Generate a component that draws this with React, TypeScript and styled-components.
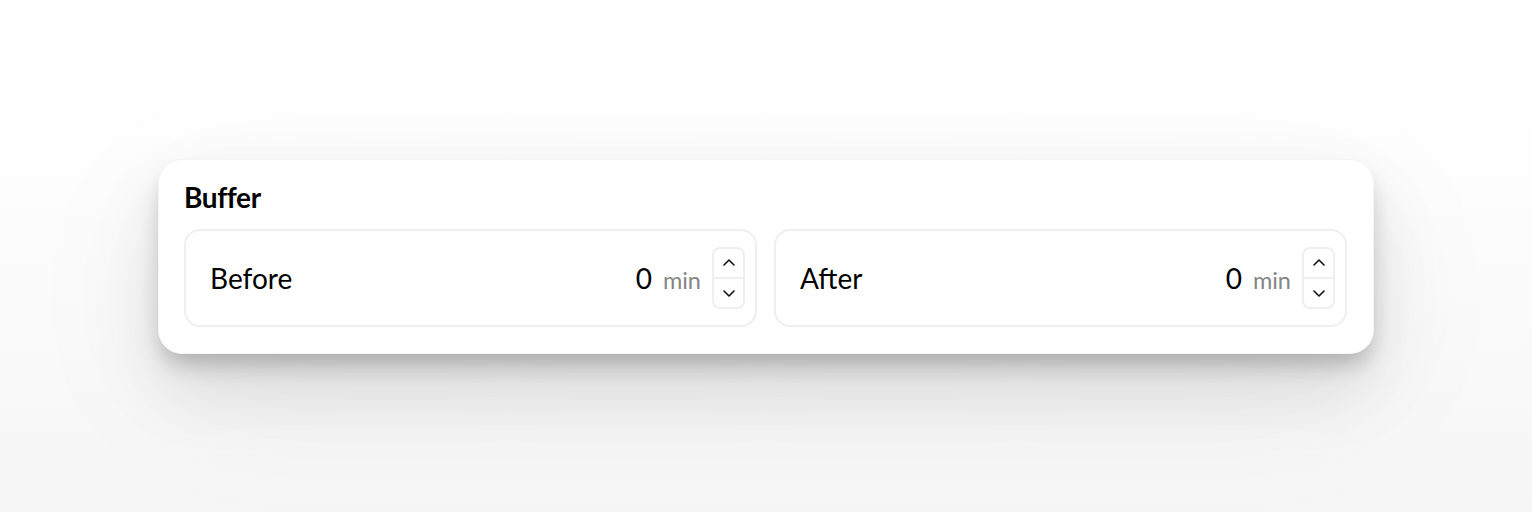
import React from "react";
import styled, { createGlobalStyle } from "styled-components";

const Global = createGlobalStyle`
  html, body { margin: 0; padding: 0; }
  body {
    font-family: Lato, "Noto Sans", sans-serif;
    background: linear-gradient(180deg, #ffffff 0%, #ffffff 20%, #f6f6f6 100%);
    color: #000;
  }
`;

const Page = styled.div`
  min-height: 100vh;
  display: flex;
  align-items: center;
  justify-content: center;
`;

const Card = styled.section`
  width: 1216px;
  box-sizing: border-box;
  background: #fff;
  border: 1px solid #f5f5f5;
  border-radius: 24px;
  padding: 20px 26px 26px 25px;
  box-shadow: 0 14px 22px -4px rgba(0, 0, 0, 0.22), 0 36px 70px rgba(0, 0, 0, 0.1),
    0 40px 160px rgba(0, 0, 0, 0.06);
  display: flex;
  flex-direction: column;
  gap: 14px;
`;

const Title = styled.h2`
  margin: 0;
  font-size: 28px;
  font-weight: 700;
  line-height: 35px;
  color: #000;
  letter-spacing: -0.4px;
`;

const Row = styled.div`
  display: grid;
  grid-template-columns: 1fr 1fr;
  gap: 17px;
`;

const Field = styled.div`
  height: 98px;
  box-sizing: border-box;
  border: 2px solid #efefef;
  border-radius: 16px;
  padding: 0 10px 0 24px;
  display: flex;
  align-items: center;
`;

const Label = styled.span`
  flex: 1;
  font-size: 28px;
  color: #000;
`;

const Value = styled.span`
  font-size: 28px;
  color: #000;
`;

const Unit = styled.span`
  font-size: 23.5px;
  color: #858585;
  margin-left: 11px;
  margin-top: 5px;
`;

const Stepper = styled.div`
  margin-left: 11px;
  width: 33px;
  height: 62px;
  box-sizing: border-box;
  border: 2px solid #efefef;
  border-radius: 8px;
  display: flex;
  flex-direction: column;
`;

const StepButton = styled.button<{ $top?: boolean }>`
  flex: 1;
  border: none;
  background: transparent;
  padding: 0;
  display: flex;
  align-items: center;
  justify-content: center;
  cursor: pointer;
  border-bottom: ${(p) => (p.$top ? "2px solid #efefef" : "none")};
`;

const Chevron = ({ up }: { up?: boolean }) => (
  <svg width="14" height="10" viewBox="0 0 14 10">
    <path
      d={up ? "M2 7 L7 2 L12 7" : "M2 3 L7 8 L12 3"}
      fill="none"
      stroke="#111"
      strokeWidth="1.6"
      strokeLinecap="round"
      strokeLinejoin="round"
    />
  </svg>
);

const BufferField = ({ label, value }: { label: string; value: number }) => (
  <Field>
    <Label>{label}</Label>
    <Value>{value}</Value>
    <Unit>min</Unit>
    <Stepper>
      <StepButton $top aria-label="increase">
        <Chevron up />
      </StepButton>
      <StepButton aria-label="decrease">
        <Chevron />
      </StepButton>
    </Stepper>
  </Field>
);

export default function App() {
  return (
    <Page>
      <Global />
      <Card>
        <Title>Buffer</Title>
        <Row>
          <BufferField label="Before" value={0} />
          <BufferField label="After" value={0} />
        </Row>
      </Card>
    </Page>
  );
}
